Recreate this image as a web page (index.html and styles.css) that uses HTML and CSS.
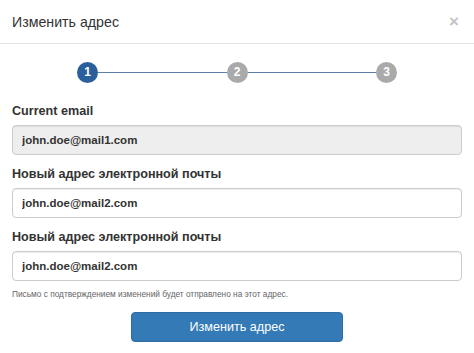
FILE: index.html
```html
<!DOCTYPE html>
<html lang="ru">
<head>
    <meta charset="UTF-8">
    <meta name="viewport" content="width=device-width, initial-scale=1.0">
    <title>Изменить адрес</title>
    <link rel="stylesheet" href="styles.css">
</head>
<body>
    <div class="modal">
        <div class="modal_header">
            <h4 class="modal_title">Изменить адрес</h4>
            <span class="close">&times;</span>
        </div>
        <div class="modal_body">
            <div class="steps">
                <span class="step active">1</span>
                <span class="step_line"></span>
                <span class="step">2</span>
                <span class="step_line"></span>
                <span class="step">3</span>
            </div>
            <form class="email_form">
                <label class="field_label" for="current">Current email</label>
                <input type="text" class="field disabled" id="current" value="john.doe@mail1.com" disabled>
                <label class="field_label" for="newEmail">Новый адрес электронной почты</label>
                <input type="text" class="field" id="newEmail" value="john.doe@mail2.com">
                <label class="field_label" for="newEmail2">Новый адрес электронной почты</label>
                <input type="text" class="field" id="newEmail2" value="john.doe@mail2.com">
                <p class="help">Письмо с подтверждением изменений будет отправлено на этот адрес.</p>
                <div class="actions">
                    <button type="button" class="btn_primary">Изменить адрес</button>
                </div>
            </form>
        </div>
    </div>
</body>
</html>
```

FILE: styles.css
```css
*{
    box-sizing: border-box;
}
body{
    margin: 0;
    background: #fff;
    font-family: "Liberation Sans", Arial, sans-serif;
    color: #333;
}
.modal{
    width: 474px;
    height: 353px;
    overflow: hidden;
}
.modal_header{
    height: 44px;
    padding: 0 12px;
    display: flex;
    align-items: center;
    justify-content: space-between;
    border-bottom: 1px solid #e5e5e5;
}
.modal_title{
    margin: 0;
    font-size: 14.2px;
    font-weight: normal;
    color: #333;
}
.close{
    font-size: 17px;
    font-weight: bold;
    color: #c4c4c4;
    margin-right: 3px;
}
.modal_body{
    padding: 0 12px;
}
.steps{
    display: flex;
    align-items: center;
    padding: 0 65px;
    margin-top: 17px;
    height: 22px;
}
.step{
    width: 21px;
    height: 21px;
    border-radius: 50%;
    background: #aaa;
    color: #fff;
    font-size: 12px;
    font-weight: bold;
    display: flex;
    align-items: center;
    justify-content: center;
    flex: none;
}
.step.active{
    background: #2a5f9c;
}
.step_line{
    flex: 1;
    height: 1px;
    background: #5a80a8;
}
.email_form{
    display: flex;
    flex-direction: column;
    margin-top: 20px;
}
.field_label{
    font-size: 12.6px;
    font-weight: bold;
    line-height: 16px;
    color: #333;
    margin-bottom: 6px;
}
.field{
    height: 30px;
    padding: 0 9px;
    border: 1px solid #ccc;
    border-radius: 4px;
    box-shadow: inset 0 1px 1px rgba(0,0,0,.075);
    font-family: inherit;
    font-size: 11.5px;
    font-weight: bold;
    color: #333;
    background: #fff;
    margin-bottom: 11px;
}
.field.disabled{
    background: #eee;
    -webkit-text-fill-color: #333;
    opacity: 1;
}
.help{
    margin: -3px 0 0;
    font-size: 8.3px;
    color: #666;
}
.actions{
    display: flex;
    justify-content: center;
    margin-top: 13px;
}
.btn_primary{
    width: 212px;
    height: 30px;
    border: 1px solid #2e6da4;
    border-radius: 4px;
    background: #337ab7;
    color: #fff;
    font-family: inherit;
    font-size: 12.6px;
}
```
